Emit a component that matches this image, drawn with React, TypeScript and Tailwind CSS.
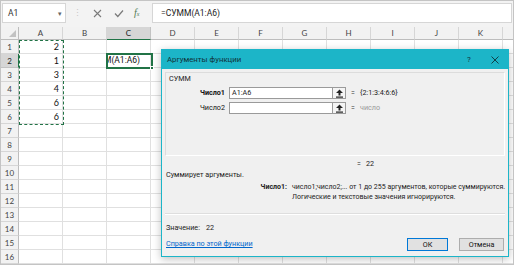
import React from 'react';

const COLS = ['A', 'B', 'C', 'D', 'E', 'F', 'G', 'H', 'I', 'J', 'K'];
const ROWS = Array.from({ length: 16 }, (_, i) => i + 1);
const VALUES: Record<number, string> = { 1: '2', 2: '1', 3: '3', 4: '4', 5: '6', 6: '6' };

const CollapseIcon = () => (
    <svg width="9" height="9" viewBox="0 0 9 9">
        <path d="M4.5 0.5 L8 4 L5.5 4 L5.5 6.5 L3.5 6.5 L3.5 4 L1 4 Z" fill="#222" />
        <rect x="1" y="7.5" width="7" height="1.2" fill="#222" />
    </svg>
);

const ArgRow = ({ label, value, hint, muted }: { label: string; value: string; hint: string; muted?: boolean }) => (
    <div className="flex items-center h-[12px] mb-[3px]">
        <div className={`w-[63px] shrink-0 text-right pr-[4px] text-[7.2px] text-[#111] ${label === 'Число1' ? 'font-bold' : ''}`}>
            {label}
        </div>
        <div className="w-[104px] shrink-0 h-[12px] bg-white border border-[#9a9a9a] text-[7.2px] leading-[10px] pl-[2px] text-[#222]">
            {value}
        </div>
        <div className="w-[13px] shrink-0 h-[12px] bg-[#f4f4f4] border border-l-0 border-[#9a9a9a] flex items-center justify-center">
            <CollapseIcon />
        </div>
        <div className="w-[9px] shrink-0 ml-[5px] text-[7px] text-[#333]">=</div>
        <div className={`text-[7.2px] ${muted ? 'text-[#9a9a9a]' : 'text-[#222]'}`}>{hint}</div>
    </div>
);

export default function App() {
    return (
        <div className="w-[514px] h-[265px] relative overflow-hidden bg-white border border-[#c4c4c4] font-['Lato','Noto_Sans',sans-serif]">
            {/* formula bar */}
            <div className="h-[26px] bg-[#f3f3f3] flex items-start pt-[2px] pl-[1px] pr-[1px]">
                <div className="w-[64px] h-[20px] bg-white border border-[#d6d6d6] flex items-center justify-between pl-[5px] pr-[3px]">
                    <span className="text-[8.5px] text-[#333] font-['Roboto',sans-serif]">A1</span>
                    <span className="text-[7px] text-[#666]">▾</span>
                </div>
                <div className="w-[22px] h-[20px] flex items-center justify-center text-[9px] text-[#c8c8c8]">⋮</div>
                <div className="w-[64px] h-[20px] flex items-center pl-[5px]">
                    <svg width="9" height="9" viewBox="0 0 9 9">
                        <path d="M1 1 L8 8 M8 1 L1 8" stroke="#7a7a7a" strokeWidth="1.1" />
                    </svg>
                    <svg width="10" height="9" viewBox="0 0 10 9" className="ml-[12px]">
                        <path d="M1 4.5 L3.8 7.5 L9 1.5" stroke="#7a7a7a" strokeWidth="1.2" fill="none" />
                    </svg>
                    <span className="ml-[10px] text-[10px] italic font-['Liberation_Serif',serif] text-[#4f7a52] leading-none">
                        f<span className="text-[6px]">x</span>
                    </span>
                </div>
                <div className="flex-1 h-[20px] bg-white border border-[#d6d6d6] flex items-center pl-[8px] text-[8.5px] text-[#222] font-['Roboto',sans-serif]">
                    =СУММ(A1:A6)
                </div>
            </div>

            {/* sheet */}
            <div className="relative">
                <div className="grid grid-cols-[18px_repeat(11,44px)_1fr] grid-rows-[13px_repeat(16,14px)]">
                    <div className="bg-[#f2f2f2] border-r border-b border-[#bdbdbd] relative">
                        <div className="absolute right-[2px] bottom-[2px] w-0 h-0 border-l-[7px] border-l-transparent border-b-[7px] border-b-[#c2c2c2]" />
                    </div>
                    {COLS.map((c) => (
                        <div
                            key={c}
                            className={`flex items-center justify-center text-[8px] border-r border-b ${
                                c === 'C'
                                    ? 'bg-[#d6d6d6] text-[#222] border-r-[#c2c2c2] border-b-[#217346]'
                                    : 'bg-[#f2f2f2] text-[#444] border-r-[#d6d6d6] border-b-[#bdbdbd]'
                            }`}
                        >
                            {c}
                        </div>
                    ))}
                    <div className="bg-[#f2f2f2] border-b border-[#bdbdbd]" />
                    {ROWS.map((r) => (
                        <React.Fragment key={r}>
                            <div
                                className={`flex items-center justify-center text-[8px] border-r border-b ${
                                    r === 2
                                        ? 'bg-[#d6d6d6] text-[#222] border-r-[#217346] border-b-[#c2c2c2]'
                                        : 'bg-[#f2f2f2] text-[#444] border-r-[#bdbdbd] border-b-[#d6d6d6]'
                                }`}
                            >
                                {r}
                            </div>
                            {COLS.map((c) => (
                                <div
                                    key={c}
                                    className={`border-r border-b border-[#e0e0e0] text-[9px] text-[#111] flex items-center overflow-hidden whitespace-nowrap ${
                                        c === 'C' && r === 2 ? 'justify-end pr-[10px]' : 'justify-end pr-[3px]'
                                    }`}
                                >
                                    {c === 'A' && VALUES[r] && <span>{VALUES[r]}</span>}
                                    {c === 'C' && r === 2 && (
                                        <span className="shrink-0 font-['Roboto',sans-serif] text-[8.5px]">=СУММ(A1:A6)</span>
                                    )}
                                </div>
                            ))}
                            <div className="border-b border-[#e0e0e0]" />
                        </React.Fragment>
                    ))}
                </div>

                {/* copy range marquee A1:A6 */}
                <div className="absolute left-[18px] top-[13px] w-[45px] h-[85px] border border-dashed border-[#217346] pointer-events-none" />
                {/* active cell C2 */}
                <div className="absolute left-[105px] top-[26px] w-[47px] h-[16px] border-2 border-[#217346] pointer-events-none">
                    <div className="absolute -right-[3px] -bottom-[3px] w-[4px] h-[4px] bg-[#217346] border border-white" />
                </div>
            </div>

            {/* function arguments dialog */}
            <div className="absolute left-[160px] top-[48px] w-[348px] h-[208px] bg-[#f0f0f0] border border-[#1cb5c8] shadow-[0_2px_8px_rgba(0,0,0,0.25)] font-['Roboto',sans-serif] flex flex-col">
                <div className="h-[19px] bg-[#1cb5c8] flex items-center pl-[5px] text-[7.8px] text-[#10333a]">
                    <span className="flex-1">Аргументы функции</span>
                    <span className="w-[26px] text-center text-[8px]">?</span>
                    <span className="w-[26px] text-center">
                        <svg width="8" height="8" viewBox="0 0 8 8" className="inline">
                            <path d="M0.5 0.5 L7.5 7.5 M7.5 0.5 L0.5 7.5" stroke="#10333a" strokeWidth="0.9" />
                        </svg>
                    </span>
                </div>
                <div className="flex-1 flex flex-col px-[3px]">
                    <div className="mt-[3px] h-[84px] border border-[#dcdcdc] border-r-white border-b-white flex flex-col">
                        <div className="text-[7.2px] text-[#222] pl-[3px] pt-[1px] h-[14px]">СУММ</div>
                        <ArgRow label="Число1" value="A1:A6" hint="{2:1:3:4:6:6}" />
                        <ArgRow label="Число2" value="" hint="число" muted />
                    </div>
                    <div className="mt-[3px] h-[10px] flex items-center pl-[192px] text-[7.2px] text-[#222]">
                        <span className="w-[9px] text-[7px]">=</span>
                        <span>22</span>
                    </div>
                    <div className="mt-[1px] h-[10px] flex items-center pl-[1px] text-[7.2px] text-[#222]">Суммирует аргументы.</div>
                    <div className="mt-[2px] flex text-[7px] leading-[10px] text-[#222]">
                        <div className="w-[127px] shrink-0 text-right pr-[5px] font-bold">Число1:</div>
                        <div>
                            <div className="whitespace-nowrap">число1;число2;... от 1 до 255 аргументов, которые суммируются.</div>
                            <div className="whitespace-nowrap">Логические и текстовые значения игнорируются.</div>
                        </div>
                    </div>
                    <div className="mt-[11px] border-t border-[#dedede] border-b border-b-white" />
                    <div className="mt-[8px] h-[10px] flex items-center pl-[1px] text-[7.2px] text-[#222]">
                        <span>Значение:</span>
                        <span className="ml-[6px]">22</span>
                    </div>
                    <div className="mt-[5px] flex items-center h-[13px]">
                        <span className="flex-1 pl-[1px] text-[7.2px] text-[#0066cc] underline">Справка по этой функции</span>
                        <button className="w-[41px] h-[13px] bg-[#e1e1e1] border border-[#0078d7] text-[7.2px] text-[#111] leading-none">ОК</button>
                        <button className="ml-[11px] mr-[1px] w-[45px] h-[13px] bg-[#e1e1e1] border border-[#adadad] text-[7.2px] text-[#111] leading-none">Отмена</button>
                    </div>
                </div>
            </div>
        </div>
    );
}
